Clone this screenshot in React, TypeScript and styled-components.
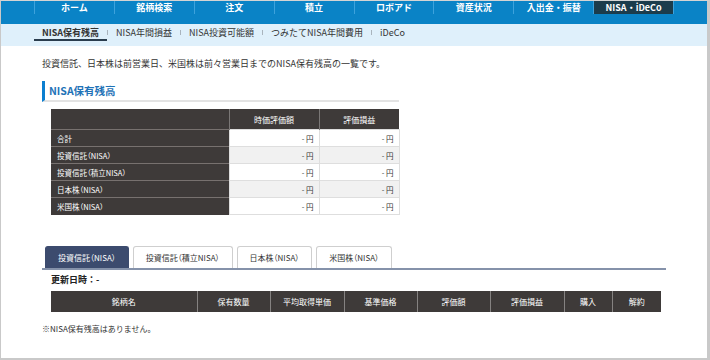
import React from "react";
import styled, { createGlobalStyle } from "styled-components";

const GlobalStyle = createGlobalStyle`
    body {
        margin: 0;
        background: #ffffff;
        font-family: "Noto Sans CJK JP", "Noto Sans", "Liberation Sans", sans-serif;
        color: #333333;
    }
`;

const mainMenu = ["ホーム", "銘柄検索", "注文", "積立", "ロボアド", "資産状況", "入出金・振替", "NISA・iDeCo"];
const subMenu = ["NISA保有残高", "NISA年間損益", "NISA投資可能額", "つみたてNISA年間費用", "iDeCo"];

const summaryRows = [
    "合計",
    "投資信託（NISA）",
    "投資信託（積立NISA）",
    "日本株（NISA）",
    "米国株（NISA）",
];

const tabs = ["投資信託（NISA）", "投資信託（積立NISA）", "日本株（NISA）", "米国株（NISA）"];

const holdingCols = [
    { label: "銘柄名", width: 146 },
    { label: "保有数量", width: 73 },
    { label: "平均取得単価", width: 74 },
    { label: "基準価格", width: 73 },
    { label: "評価額", width: 73 },
    { label: "評価損益", width: 74 },
    { label: "購入", width: 48 },
    { label: "解約", width: 49 },
];

export default function App() {
    return (
        <>
            <GlobalStyle />
            <Frame>
                <NavBar>
                    <Inner>
                        <NavList>
                            {mainMenu.map((m, i) => (
                                <NavItem key={m} active={i === mainMenu.length - 1}>
                                    {m}
                                </NavItem>
                            ))}
                        </NavList>
                    </Inner>
                </NavBar>
                <SubNavBar>
                    <Inner>
                        <SubList>
                            {subMenu.map((m, i) => (
                                <React.Fragment key={m}>
                                    {i > 0 && <SubSep />}
                                    <SubItem active={i === 0}>{m}</SubItem>
                                </React.Fragment>
                            ))}
                        </SubList>
                    </Inner>
                </SubNavBar>
                <Inner>
                    <Content>
                        <Lead>
                            投資信託、日本株は前営業日、米国株は前々営業日までのNISA保有残高の一覧です。
                        </Lead>
                        <Heading>NISA保有残高</Heading>
                        <SummaryTable>
                            <colgroup>
                                <col style={{ width: 178 }} />
                                <col style={{ width: 90 }} />
                                <col style={{ width: 80 }} />
                            </colgroup>
                            <thead>
                                <tr>
                                    <HeadCell />
                                    <HeadCell>時価評価額</HeadCell>
                                    <HeadCell>評価損益</HeadCell>
                                </tr>
                            </thead>
                            <tbody>
                                {summaryRows.map((r, i) => (
                                    <tr key={r}>
                                        <LabelCell>{r}</LabelCell>
                                        <ValueCell shaded={i % 2 === 1}>- 円</ValueCell>
                                        <ValueCell shaded={i % 2 === 1}>- 円</ValueCell>
                                    </tr>
                                ))}
                            </tbody>
                        </SummaryTable>

                        <TabRow>
                            {tabs.map((t, i) => (
                                <Tab key={t} active={i === 0}>
                                    {t}
                                </Tab>
                            ))}
                        </TabRow>
                        <Updated>更新日時：-</Updated>
                        <HoldingTable>
                            <colgroup>
                                {holdingCols.map((c) => (
                                    <col key={c.label} style={{ width: c.width }} />
                                ))}
                            </colgroup>
                            <thead>
                                <tr>
                                    {holdingCols.map((c) => (
                                        <HoldHead key={c.label}>{c.label}</HoldHead>
                                    ))}
                                </tr>
                            </thead>
                        </HoldingTable>
                        <Note>※NISA保有残高はありません。</Note>
                    </Content>
                </Inner>
            </Frame>
        </>
    );
}

const Frame = styled.div`
    width: 710px;
    height: 360px;
    box-sizing: border-box;
    border: 2px solid #c9c9c9;
    border-left-width: 1px;
    border-right-width: 3px;
    border-top: 1px solid #d4d4d4;
    overflow: hidden;
    background: #ffffff;
`;

const Inner = styled.div`
    width: 640px;
    margin: 0 auto;
`;

const NavBar = styled.div`
    background: #0a83c6;
    height: 23px;
`;

const NavList = styled.div`
    display: flex;
    height: 100%;
    border-right: 1px solid #3da2dc;
`;

const NavItem = styled.div<{ active?: boolean }>`
    width: 80px;
    box-sizing: border-box;
    border-left: 1px solid #3da2dc;
    display: flex;
    align-items: center;
    justify-content: center;
    color: #ffffff;
    font-size: 9px;
    font-weight: bold;
    background: ${(p) => (p.active ? "#1b3c4c" : "transparent")};
`;

const SubNavBar = styled.div`
    background: #dff0fb;
    height: 22px;
`;

const SubList = styled.div`
    display: flex;
    align-items: stretch;
    height: 100%;
`;

const SubItem = styled.div<{ active?: boolean }>`
    display: flex;
    align-items: center;
    padding: 0 8px;
    font-size: 9px;
    color: #333333;
    font-weight: ${(p) => (p.active ? "bold" : "normal")};
    box-sizing: border-box;
    border-bottom: 2px solid ${(p) => (p.active ? "#2a3d4e" : "transparent")};
    border-top: 2px solid transparent;
`;

const SubSep = styled.div`
    width: 1px;
    background: #a9b4bd;
    margin: 6px 0;
`;

const Content = styled.div`
    padding: 11px 8px 0;
    display: flex;
    flex-direction: column;
    align-items: flex-start;
`;

const Lead = styled.p`
    margin: 0;
    font-size: 9px;
    line-height: 14px;
    color: #333333;
`;

const Heading = styled.h2`
    margin: 10px 0 0;
    width: 357px;
    box-sizing: border-box;
    height: 21px;
    line-height: 19px;
    padding-left: 4px;
    font-size: 10.5px;
    font-weight: bold;
    color: #1f73b7;
    border-left: 3px solid #0c7fd0;
    border-bottom: 2px solid #e3e3e3;
`;

const SummaryTable = styled.table`
    margin: 7px 0 0 9px;
    width: 348px;
    border-collapse: collapse;
    table-layout: fixed;
`;

const HeadCell = styled.th`
    background: #3e3a39;
    color: #ffffff;
    height: 20px;
    padding: 0;
    font-size: 8px;
    font-weight: normal;
    text-align: center;
    border-left: 1px solid #7a7776;
    &:first-child {
        border-left: none;
    }
`;

const LabelCell = styled.td`
    background: #3e3a39;
    color: #ffffff;
    height: 16px;
    padding: 0 6px;
    font-size: 7.5px;
    font-feature-settings: "palt";
    border-top: 1px solid #77716f;
`;

const ValueCell = styled.td<{ shaded?: boolean }>`
    background: ${(p) => (p.shaded ? "#f1f1f1" : "#ffffff")};
    color: #333333;
    height: 16px;
    padding: 0 5px;
    font-size: 7.5px;
    text-align: right;
    border: 1px solid #dedede;
`;

const TabRow = styled.div`
    margin-top: 31px;
    width: 624px;
    box-sizing: border-box;
    padding-left: 3px;
    display: flex;
    gap: 4px;
    border-bottom: 2px solid #8592aa;
`;

const Tab = styled.div<{ active?: boolean }>`
    height: 22px;
    box-sizing: border-box;
    padding: 0 12px;
    display: flex;
    align-items: center;
    font-size: 8px;
    font-feature-settings: "palt";
    border: 1px solid ${(p) => (p.active ? "#3c4b6e" : "#cfcfcf")};
    border-bottom: none;
    border-radius: 3px 3px 0 0;
    background: ${(p) => (p.active ? "#3c4b6e" : "#ffffff")};
    color: ${(p) => (p.active ? "#ffffff" : "#333333")};
`;

const Updated = styled.div`
    margin: 3px 0 0 9px;
    font-size: 9px;
    line-height: 13px;
    font-weight: bold;
    color: #222222;
`;

const HoldingTable = styled.table`
    margin: 5px 0 0 9px;
    width: 610px;
    border-collapse: collapse;
    table-layout: fixed;
`;

const HoldHead = styled.th`
    background: #3e3a39;
    color: #ffffff;
    height: 21px;
    padding: 0;
    font-size: 8px;
    font-weight: normal;
    text-align: center;
    border-left: 1px solid #858281;
    &:first-child {
        border-left: none;
    }
`;

const Note = styled.p`
    margin: 11px 0 0;
    font-size: 8px;
    line-height: 12px;
    color: #333333;
`;
